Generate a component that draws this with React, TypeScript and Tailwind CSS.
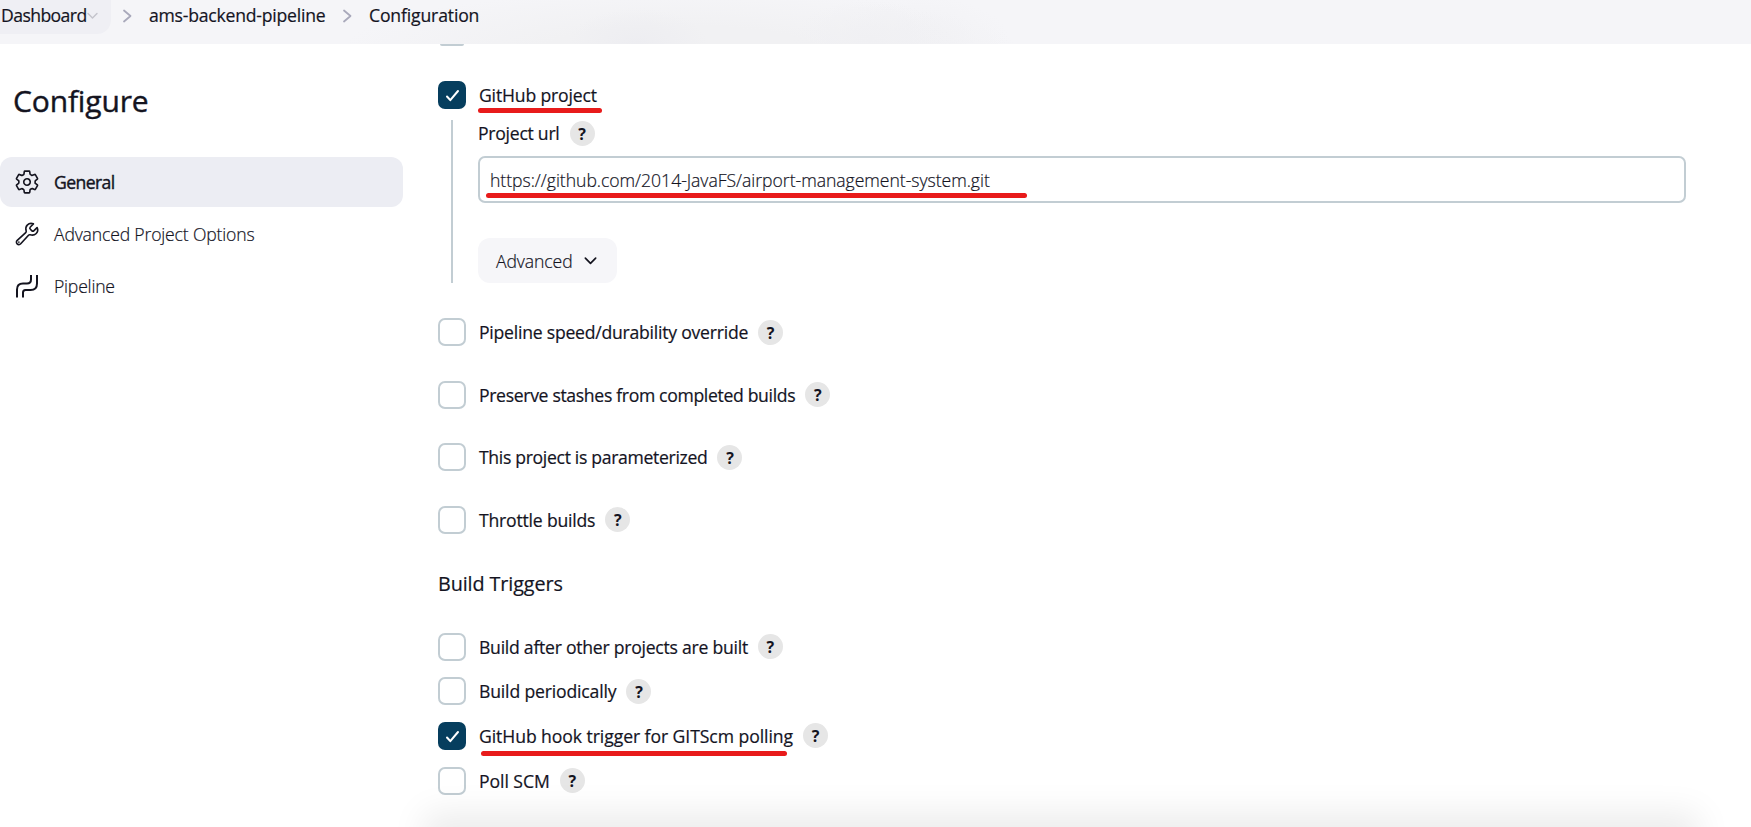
import React from "react";
import { IoSettingsOutline, IoBuildOutline } from "react-icons/io5";

const Chevron = ({ d, className }: { d: string; className: string }) => (
  <svg viewBox="0 0 16 16" fill="none" stroke="currentColor" strokeWidth="1.8" className={className}>
    <path d={d} strokeLinecap="round" strokeLinejoin="round" />
  </svg>
);

const Help = () => (
  <span className="flex h-[25px] w-[25px] shrink-0 items-center justify-center rounded-full bg-[#e6e6e6] pt-px text-[16px] font-bold leading-none text-[#14141f] [-webkit-text-stroke:0]">?</span>
);

const Box = ({ checked }: { checked?: boolean }) =>
  checked ? (
    <span className="flex h-7 w-7 shrink-0 items-center justify-center rounded-[7px] bg-[#063e5e] text-white">
      <svg viewBox="0 0 28 28" className="h-7 w-7" fill="none" stroke="currentColor" strokeWidth="2" strokeLinecap="round" strokeLinejoin="round">
        <path d="M9 15.500l3.300 3.700L20 10" />
      </svg>
    </span>
  ) : (
    <span className="h-7 w-7 shrink-0 rounded-[7px] border-2 border-[#c2cdd3] bg-white" />
  );

const Row = ({ label, track, checked, help = true, children }: { label: string; track: string; checked?: boolean; help?: boolean; children?: React.ReactNode }) => (
  <div className="relative flex h-7 items-center">
    <Box checked={checked} />
    <span className={"ml-[13px] mr-[10px] whitespace-nowrap " + track}>{label}</span>
    {help && <Help />}
    {children}
  </div>
);

export default function App() {
  return (
    <div className="flex h-[827px] w-[1751px] flex-col overflow-hidden bg-white font-['Open_Sans','Noto_Sans',sans-serif] text-[17.6px] font-medium leading-7 text-[#14141f] [-webkit-text-stroke:0.2px]">
      <header className="flex h-11 shrink-0 items-start bg-[#f5f5f8] bg-[radial-gradient(70px_36px_at_638px_44px,#ededf1,transparent),radial-gradient(80px_40px_at_870px_40px,#f0f0f3,transparent),radial-gradient(90px_44px_at_920px_40px,#f1f1f4,transparent),radial-gradient(340px_60px_at_680px_50px,#f1f1f3_40%,transparent)]">
        <div className="flex h-[34px] w-[111px] items-start rounded-br-[14px] bg-[#efeff4] pl-px pt-px">
          <span className="tracking-[-0.58px]">Dashboard</span>
          <Chevron d="M2.5 5.5L8 11l5.5-5.5" className="-ml-px mt-2 h-[13px] w-[13px] shrink-0 text-[#c4c4cc]" />
        </div>
        <Chevron d="M5 2.5L11.5 8L5 13.5" className="ml-2 mt-2 h-4 w-4 text-[#a9a9bb]" />
        <span className="ml-[14px] w-[177px] whitespace-nowrap pt-px tracking-[-0.22px]">ams-backend-pipeline</span>
        <Chevron d="M5 2.5L11.5 8L5 13.5" className="ml-[13px] mt-2 h-4 w-4 text-[#a9a9bb]" />
        <span className="ml-[14px] whitespace-nowrap pt-px tracking-[-0.15px]">Configuration</span>
      </header>
      <div className="flex min-h-0 flex-1">
        <aside className="w-[438px] shrink-0">
          <h1 className="ml-[13px] mt-[37px] h-10 text-[30px] leading-10 tracking-[-0.15px] [-webkit-text-stroke:0.4px]">Configure</h1>
          <nav className="mt-[36px] flex w-[403px] flex-col gap-[2px]">
            <div className="flex h-[50px] items-center rounded-[12px] bg-[#ecedf3] pl-[14px]">
              <IoSettingsOutline className="h-[26px] w-[26px]" />
              <span className="ml-[14px] tracking-[-0.6px] [-webkit-text-stroke:0.4px]">General</span>
            </div>
            <div className="flex h-[50px] items-center pl-[14px]">
              <IoBuildOutline className="h-[26px] w-[26px]" />
              <span className="ml-[14px] font-light tracking-[-0.17px]">Advanced Project Options</span>
            </div>
            <div className="flex h-[50px] items-center pl-[14px]">
              <svg viewBox="0 0 26 26" className="h-[26px] w-[26px]" fill="none" stroke="currentColor" strokeWidth="2">
                <path d="M3 24.500V16.500Q3 10.500 9 10.500H13Q17 10.500 17 6.500V2M9 24.500V19.500Q9 17 11.500 17H16.500Q23 17 23 10.500V2" />
              </svg>
              <span className="ml-[14px] font-light tracking-[-0.2px]">Pipeline</span>
            </div>
          </nav>
        </aside>
        <main className="relative w-[1247px]">
          <div className="ml-[2px] h-[2px] w-6 overflow-hidden rounded-b-[7px] bg-[#c2cdd3]" />
          <div className="mt-[35px]">
            <Row label="GitHub project" track="tracking-[-0.17px]" checked help={false}>
              <span className="absolute left-10 top-[27px] h-[5px] w-[124px] rounded-full bg-[#e81b1b]" />
            </Row>
          </div>
          <div className="ml-[13px] mt-[11px] h-[163px] border-l-2 border-[#c2cdd3] pl-[25px]">
            <div className="flex h-[26px] items-center">
              <span className="mr-[10px] tracking-[-0.26px]">Project url</span>
              <Help />
            </div>
            <div className="relative mt-[10px] flex h-[47px] w-[1208px] items-center rounded-[7px] border-2 border-[#c2cdd3] pl-[10px] font-light tracking-[-0.03px]">
              <span>https://github.com/2014-JavaFS/airport-management-system.git</span>
              <span className="absolute left-[6px] top-[35px] h-[5px] w-[541px] rounded-full bg-[#e81b1b]" />
            </div>
            <div className="mt-[35px] flex h-[45px] w-[139px] items-center rounded-[12px] bg-[#f6f6f9] pl-[18px] font-light tracking-[-0.1px]">
              <span className="w-[87px] pt-px">Advanced</span>
              <Chevron d="M2.500 5.500L8 11l5.500-5.500" className="h-[15px] w-[15px]" />
            </div>
          </div>
          <div className="mt-[35px] flex flex-col gap-[34.500px]">
            <Row label="Pipeline speed/durability override" track="tracking-[-0.23px]" />
            <Row label="Preserve stashes from completed builds" track="tracking-[-0.33px]" />
            <Row label="This project is parameterized" track="tracking-[-0.32px]" />
            <Row label="Throttle builds" track="tracking-[-0.2px]" />
          </div>
          <h2 className="mt-[36px] h-7 text-[19.8px] tracking-[-0.1px]">Build Triggers</h2>
          <div className="mt-[35px] flex flex-col gap-[16.700px]">
            <Row label="Build after other projects are built" track="tracking-[-0.25px]" />
            <Row label="Build periodically" track="tracking-[-0.16px]" />
            <Row label="GitHub hook trigger for GITScm polling" track="tracking-[-0.07px]" checked>
              <span className="absolute left-[43px] top-[29px] h-[5px] w-[306px] rounded-full bg-[#e81b1b]" />
            </Row>
            <Row label="Poll SCM" track="tracking-[-0.05px]" />
          </div>
          <div className="absolute bottom-[-20px] left-0 h-5 w-full shadow-[0_0_34px_14px_rgba(0,0,0,0.08)]" />
        </main>
      </div>
    </div>
  );
}
